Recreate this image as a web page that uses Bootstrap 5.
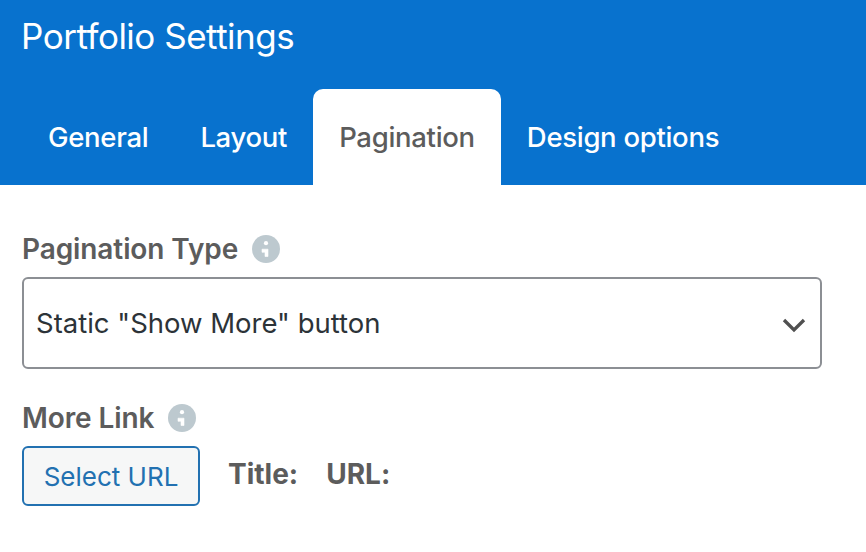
<!DOCTYPE html>
<html lang="en">
<head>
<meta charset="utf-8">
<meta name="viewport" content="width=device-width, initial-scale=1">
<title>Portfolio Settings</title>
<link href="https://cdn.jsdelivr.net/npm/bootstrap@5.3.0/dist/css/bootstrap.min.css" rel="stylesheet">
<style>
body{font-family:Inter,"Liberation Sans",sans-serif;font-size:28px;line-height:36px;color:#5c5c5c;background:#fff;overflow:hidden}
.panel-head{background:#0872ce;height:185px;color:#fff}
.panel-title{font-size:35px;line-height:40px;padding:16px 21px 0;font-weight:400;letter-spacing:-.5px}
.panel-tabs{padding-left:22px;border:0}
.panel-tabs .nav-link{height:96px;margin:0;padding:0 26px;line-height:97px;color:#fff;border:0;border-radius:10px 10px 0 0;font-weight:450;font-size:27.5px;letter-spacing:-.3px;white-space:nowrap}
.panel-tabs .nav-link.active{background:#fff;color:#5c5c5c}
.panel-main{padding:46px 44px 0 22px}
.field-label{font-weight:600;height:36px;gap:14px;letter-spacing:-.1px}
.type-select{height:92px;margin-top:10px;margin-bottom:31px;border:2px solid #8c8f94;border-radius:6px;padding:0 14px 0 12px;color:#2c3338;background:#fff;font-size:27.5px}
.type-select svg{position:relative;top:2px}
.link-row{margin-top:10px}
.url-btn{width:178px;height:60px;padding:1px 0 0;border:2px solid #2271b1;border-radius:6px;background:#f6f7f7;color:#2271b1;font-size:26px}
.meta-label{font-weight:700;margin-left:28px;padding-bottom:4px;font-feature-settings:"calt" 0}
</style>
</head>
<body>
<header class="panel-head d-flex flex-column justify-content-between">
<h1 class="panel-title m-0"><span>Portfolio Settings</span></h1>
<ul class="nav nav-tabs panel-tabs flex-nowrap">
<li class="nav-item"><a class="nav-link" href="#"><span>General</span></a></li>
<li class="nav-item"><a class="nav-link" href="#"><span>Layout</span></a></li>
<li class="nav-item"><a class="nav-link active" href="#"><span>Pagination</span></a></li>
<li class="nav-item"><a class="nav-link" href="#"><span>Design options</span></a></li>
</ul>
</header>
<main class="panel-main">
<div class="field-label d-flex align-items-center"><span>Pagination Type</span>
<svg width="28" height="28" viewBox="0 0 28 28"><circle cx="14" cy="14" r="14" fill="#bdc9cf"/><circle cx="14" cy="8.2" r="2.1" fill="#fff"/><path d="M10 14.2h6v7.3h-3v-4.2h-3z" fill="#fff" stroke="#fff" stroke-width=".6" stroke-linejoin="round"/></svg></div>
<button type="button" class="type-select w-100 d-flex justify-content-between align-items-center"><span>Static "Show More" button</span>
<svg width="24" height="16" viewBox="0 0 24 16"><path d="M2 3l10 10L22 3" fill="none" stroke="#505050" stroke-width="3.3"/></svg></button>
<div class="field-label d-flex align-items-center"><span>More Link</span>
<svg width="28" height="28" viewBox="0 0 28 28"><circle cx="14" cy="14" r="14" fill="#bdc9cf"/><circle cx="14" cy="8.2" r="2.1" fill="#fff"/><path d="M10 14.2h6v7.3h-3v-4.2h-3z" fill="#fff" stroke="#fff" stroke-width=".6" stroke-linejoin="round"/></svg></div>
<div class="link-row d-flex align-items-center"><button type="button" class="btn url-btn">Select URL</button><span class="meta-label">Title:</span><span class="meta-label">URL:</span></div>
</main>
</body>
</html>
